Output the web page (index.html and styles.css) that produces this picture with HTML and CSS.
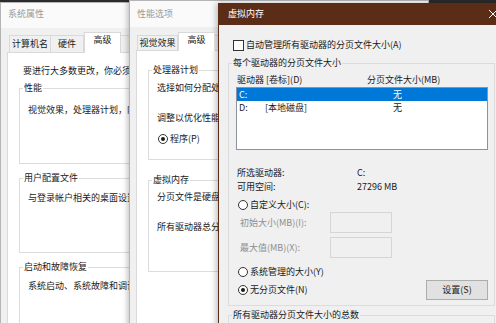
FILE: index.html
```html
<!DOCTYPE html>
<html lang="zh-CN">
<head>
    <meta charset="UTF-8">
    <title>虚拟内存</title>
    <link rel="stylesheet" href="styles.css">
</head>
<body>
    <div class="desk">
        <!-- 系统属性 -->
        <div class="win win-sys">
            <div class="title">系统属性</div>
            <div class="body">
                <div class="tabs">
                    <span class="tab w42">计算机名</span>
                    <span class="tab w33">硬件</span>
                    <span class="tab on w37">高级</span>
                    <span class="tab w50">系统保护</span>
                </div>
                <div class="panel">
                    <p class="intro">要进行大多数更改，你必须作为管理员登录。</p>
                    <fieldset class="grp g-perf">
                        <legend>性能</legend>
                        <p class="line l1">视觉效果，处理器计划，内存使用，以及虚拟内存</p>
                    </fieldset>
                    <fieldset class="grp g-user">
                        <legend>用户配置文件</legend>
                        <p class="line l2">与登录帐户相关的桌面设置</p>
                    </fieldset>
                    <fieldset class="grp g-boot">
                        <legend>启动和故障恢复</legend>
                        <p class="line l3">系统启动、系统故障和调试信息</p>
                    </fieldset>
                </div>
            </div>
        </div>

        <!-- 性能选项 -->
        <div class="win win-perf">
            <div class="title">性能选项</div>
            <div class="body">
                <div class="tabs">
                    <span class="tab w41">视觉效果</span>
                    <span class="tab on w37">高级</span>
                    <span class="tab w50">数据执行保护</span>
                </div>
                <div class="panel">
                    <fieldset class="grp g-cpu">
                        <legend>处理器计划</legend>
                        <p class="line p1">选择如何分配处理器资源。</p>
                        <p class="line p2">调整以优化性能：</p>
                        <div class="radio-row p3"><span class="radio on"><i></i></span>程序(P)</div>
                    </fieldset>
                    <fieldset class="grp g-vm">
                        <legend>虚拟内存</legend>
                        <p class="line p4">分页文件是硬盘上的一块区域，Windows 当作 RAM 使用。</p>
                        <p class="line p5">所有驱动器总分页文件大小：</p>
                    </fieldset>
                </div>
            </div>
        </div>

        <!-- 虚拟内存 -->
        <div class="win win-vm">
            <div class="title">
                <span>虚拟内存</span>
                <svg class="close" width="10" height="10" viewBox="0 0 10 10">
                    <path d="M1 1 L9 9 M9 1 L1 9" stroke="#fff" stroke-width="1" fill="none"/>
                </svg>
            </div>
            <div class="body vm-body">
                <div class="check-row"><span class="check"></span>自动管理所有驱动器的分页文件大小(A)</div>

                <fieldset class="grp g-drives">
                    <legend>每个驱动器的分页文件大小</legend>
                    <div class="list-head"><span class="col-a">驱动器 [卷标](D)</span><span>分页文件大小(MB)</span></div>
                    <div class="list">
                        <div class="row sel"><span class="c-drive">C:</span><span class="c-label"></span><span>无</span></div>
                        <div class="row"><span class="c-drive">D:</span><span class="c-label">[本地磁盘]</span><span>无</span></div>
                    </div>
                    <div class="info">
                        <div class="info-row"><span class="info-k">所选驱动器:</span><span>C:</span></div>
                        <div class="info-row"><span class="info-k">可用空间:</span><span>27296 MB</span></div>
                    </div>
                    <div class="radio-row r-custom"><span class="radio"></span>自定义大小(C):</div>
                    <div class="field f1"><span class="field-k">初始大小(MB)(I):</span><span class="input"></span></div>
                    <div class="field f2"><span class="field-k">最大值(MB)(X):</span><span class="input"></span></div>
                    <div class="radio-row r-sys"><span class="radio"></span>系统管理的大小(Y)</div>
                    <div class="last-row">
                        <div class="radio-row"><span class="radio on"><i></i></span>无分页文件(N)</div>
                        <button class="btn">设置(S)</button>
                    </div>
                </fieldset>

                <fieldset class="grp g-total">
                    <legend>所有驱动器分页文件大小的总数</legend>
                </fieldset>
            </div>
        </div>
    </div>
</body>
</html>
```

FILE: styles.css
```css
* { margin: 0; padding: 0; box-sizing: border-box; }
body { width: 496px; height: 323px; overflow: hidden; background: #2b2b2b; font-family: "Noto Sans CJK SC", "Noto Sans", sans-serif; font-size: 9px; line-height: 12px; color: #1a1a1a; }
.desk { position: relative; width: 496px; height: 323px; overflow: hidden; }

/* windows */
.win { position: absolute; height: 340px; background: #f0f0f0; border: 1px solid #b4b4b4; overflow: hidden; display: flex; flex-direction: column; white-space: nowrap; }
.win-sys { left: 0; top: 2px; width: 260px; }
.win-perf { left: 129px; top: 0; width: 300px; box-shadow: -2px 0 5px rgba(0, 0, 0, 0.22); }
.win-vm { left: 218px; top: 3px; width: 290px; border-color: #5b2c16; box-shadow: -2px 0 6px rgba(0, 0, 0, 0.25); }

.title { flex-shrink: 0; background: #fafafa; color: #9a9a9a; padding-left: 7px; }
.win-sys .title { height: 25px; padding-top: 5px; }
.win-perf .title { height: 26px; padding-top: 7px; }
.win-vm .title { height: 21px; padding: 4px 0 0 9px; background: #5b2c16; color: #fff; display: flex; justify-content: space-between; }
.close { margin: 1px 9px 0 0; }

.body { flex: 1; display: flex; flex-direction: column; min-height: 0; }
.win-sys .body { padding-left: 6px; }
.win-perf .body { padding-left: 6px; }

/* tabs */
.tabs { flex-shrink: 0; display: flex; align-items: flex-end; }
.win-sys .tabs { height: 24px; padding-left: 2px; }
.win-perf .tabs { height: 23px; padding-left: 1px; }
.tab { border: 1px solid #d9d9d9; border-bottom: none; background: #f0f0f0; text-align: center; color: #1a1a1a; }
.win-sys .tab { height: 17px; line-height: 15px; }
.win-perf .tab { height: 15px; line-height: 13px; }
.tab + .tab { border-left: none; }
.tab.on { background: #fff; position: relative; z-index: 1; margin-bottom: -1px; border-left: 1px solid #d9d9d9; }
.win-sys .tab.on { height: 21px; line-height: 14px; }
.win-perf .tab.on { height: 19px; line-height: 13px; }
.tab.on + .tab { border-left: none; }
.w33 { width: 33px; } .w37 { width: 37px; } .w41 { width: 41px; } .w42 { width: 42px; } .w50 { width: 60px; }

.panel { flex: 1; background: #fff; border: 1px solid #d9d9d9; }
.win-sys .panel { padding: 12px 0 0 11px; }
.win-perf .panel { padding: 13px 0 0 11px; }

/* group boxes */
.grp { border: 1px solid #dcdcdc; margin: 0; padding: 0 6px 0 8px; min-width: 0; }
.grp legend { padding: 0 1px; margin-left: -5px; line-height: 12px; }
.line { line-height: 12px; }

.intro { margin-left: 4px; }
.g-perf { margin-top: 5px; width: 200px; height: 82px; }
.g-user { margin-top: 8px; width: 200px; height: 81px; }
.g-boot { margin-top: 8px; width: 200px; height: 100px; }
.l1 { margin-top: 10px; }
.l2 { margin-top: 8px; }
.l3 { margin-top: 7px; }

.g-cpu { width: 150px; height: 96px; }
.g-vm { margin-top: 14px; width: 150px; height: 98px; }
.p1 { margin-top: 6px; }
.p2 { margin-top: 18px; }
.p3 { margin-top: 9px; }
.p4 { margin-top: 5px; }
.p5 { margin-top: 18px; }

/* radio / checkbox */
.radio-row { display: flex; align-items: center; gap: 2px; height: 12px; }
.radio { width: 10px; height: 10px; border: 1px solid #333; border-radius: 50%; background: #fff; display: flex; align-items: center; justify-content: center; margin-left: 1px; }
.radio.on i { width: 4px; height: 4px; border-radius: 50%; background: #1a1a1a; }
.check-row { flex-shrink: 0; display: flex; align-items: center; gap: 2px; height: 12px; margin-top: 14px; margin-left: 14px; }
.check { width: 11px; height: 11px; border: 1px solid #333; background: #fff; }

/* 虚拟内存 */
.vm-body > * { flex-shrink: 0; }
.g-drives { margin: 6px 0 0 9px; width: 267px; padding-bottom: 5px; }
.list-head { display: flex; margin-top: 5px; height: 12px; }
.col-a { width: 130px; }
.list { margin: 1px 0 0 -1px; height: 63px; border: 1px solid #8c93a0; background: #fff; padding-left: 2px; }
.row { display: flex; height: 13px; line-height: 13px; margin-left: -2px; padding-left: 2px; }
.row.sel { background: #0078d7; color: #fff; }
.c-drive { width: 26px; }
.c-label { width: 128px; }
.info { margin-top: 16px; }
.info-row { display: flex; height: 14px; line-height: 14px; }
.info-k { width: 120px; }
.r-custom { margin-top: 5px; }
.field { display: flex; align-items: center; height: 21px; }
.f1 { margin-top: 1px; }
.f2 { margin-top: 4px; }
.field-k { width: 93px; padding-left: 3px; color: #8d8d8d; }
.input { width: 62px; height: 21px; border: 1px solid #d5d5d5; background: #f0f0f0; }
.r-sys { margin-top: 8px; }
.last-row { display: flex; justify-content: space-between; align-items: center; height: 20px; margin-top: 2px; }
.btn { width: 62px; height: 20px; background: #e1e1e1; border: 1px solid #adadad; font: inherit; color: #1a1a1a; }
.g-total { margin: 3px 0 0 9px; width: 267px; height: 40px; }
```
